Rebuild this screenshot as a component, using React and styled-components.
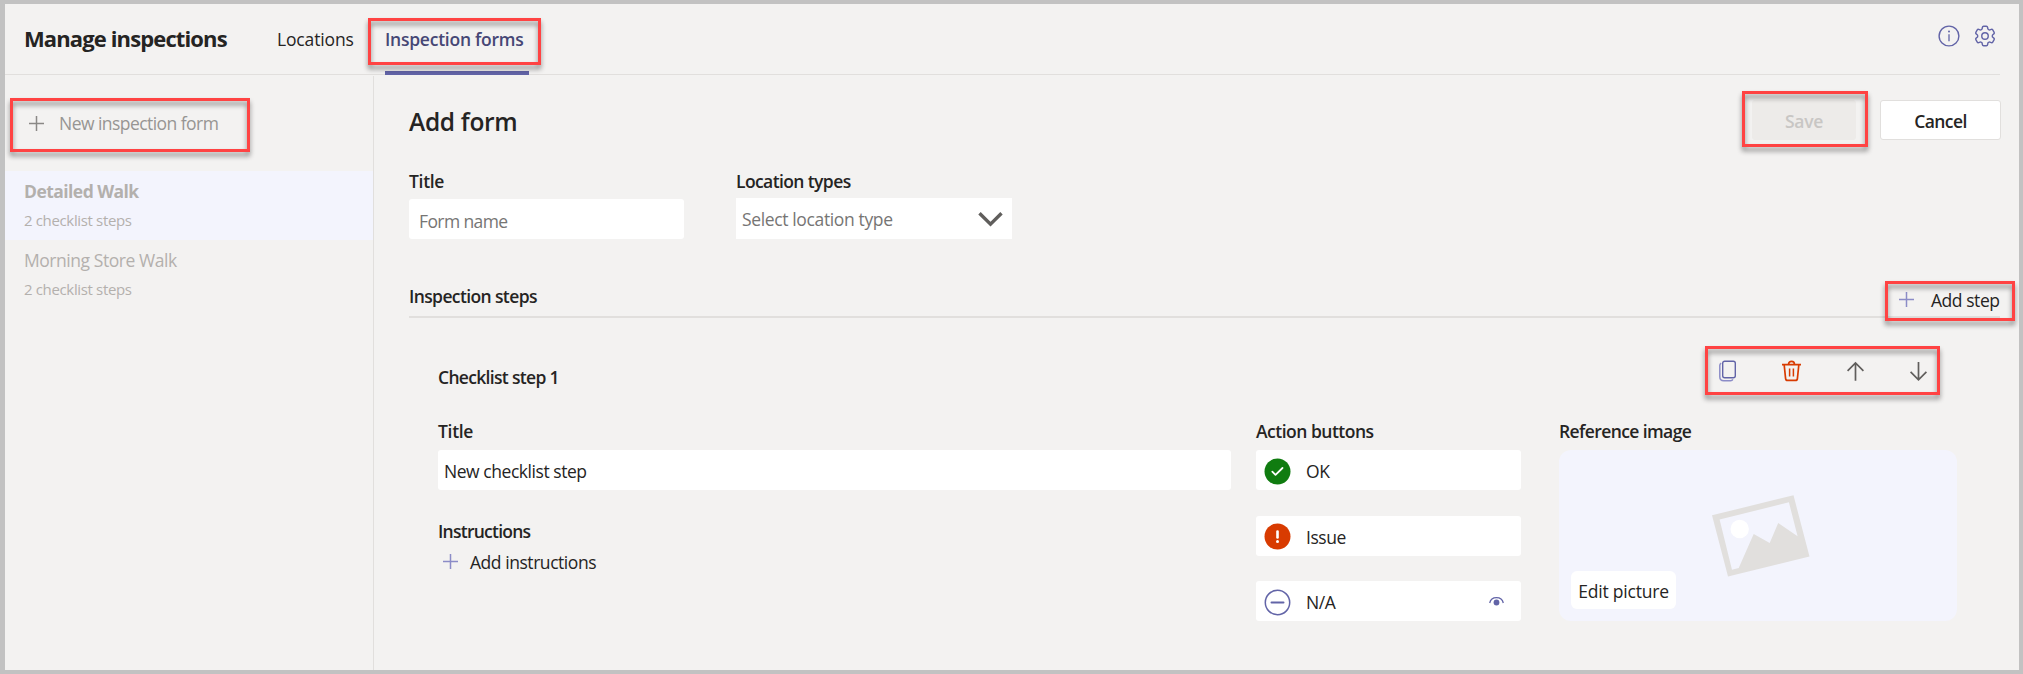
import React from "react";
import styled, { createGlobalStyle } from "styled-components";
import { HiOutlineCog6Tooth } from "react-icons/hi2";

const GlobalStyle = createGlobalStyle`
  * { box-sizing: border-box; }
  body { margin: 0; background: #f3f2f1; }
  button, input { font: inherit; color: inherit; letter-spacing: inherit; }
`;

const Frame = styled.div`
  display: flex;
  flex-direction: column;
  width: 2023px;
  height: 674px;
  border: solid #c2c2c2;
  border-width: 4px 4px 4px 5px;
  background: #f3f2f1;
  color: #252423;
  font: 400 17.5px/24px "Open Sans", "Noto Sans", sans-serif;
  letter-spacing: -0.45px;
  white-space: nowrap;
  overflow: hidden;
`;

const Header = styled.header`
  display: flex;
  align-items: flex-start;
  height: 71px;
  margin-right: 19px;
  border-bottom: 1px solid #e1dfdd;
`;

const AppTitle = styled.h1`
  width: 252px;
  margin: 19px 0 0;
  padding-left: 19px;
  font-size: 22px;
  line-height: 30px;
  font-weight: 700;
  letter-spacing: -0.88px;
`;

const Tabs = styled.nav`
  display: flex;
  gap: 31px;
  margin-left: 20px;
`;

const Tab = styled.a`
  position: relative;
  width: ${(p) => (p.$active ? 144 : 77)}px;
  height: 71px;
  padding-top: 23px;
  color: ${(p) => (p.$active ? "#464775" : "#252423")};
  font-weight: ${(p) => (p.$active ? 600 : 400)};
  letter-spacing: ${(p) => (p.$active ? -0.25 : -0.15)}px;
  border-bottom: 4px solid ${(p) => (p.$active ? "#6264a7" : "transparent")};
`;

const HeaderIcons = styled.div`
  display: flex;
  align-items: center;
  gap: 12px;
  height: 25px;
  margin: 19px 2px 0 auto;
  color: #6264a7;
`;

/* Hollow annotation frame laid over the control it points out. */
const Callout = styled.span`
  position: absolute;
  top: ${(p) => p.$top}px;
  left: ${(p) => p.$left}px;
  width: ${(p) => p.$width}px;
  height: ${(p) => p.$height}px;
  border: 3px solid #ff4343;
  filter: drop-shadow(0 4px 2.5px rgba(0, 0, 0, 0.45));
  pointer-events: none;
`;

const Body = styled.div`
  display: flex;
  flex: 1;
  margin-top: 1px;
  min-height: 0;
`;

const Sidebar = styled.aside`
  width: 369px;
  border-right: 1px solid #e1dfdd;
`;

const NewForm = styled.div`
  position: relative;
  display: flex;
  align-items: center;
  gap: 15px;
  height: 95px;
  padding: 0 0 1px 24px;
  color: #979593;
  letter-spacing: -0.55px;
`;

const FormItem = styled.div`
  display: flex;
  flex-direction: column;
  gap: 7px;
  height: 69px;
  padding: 8px 0 0 19px;
  color: #b3b0ad;
  background: ${(p) => (p.$selected ? "#f3f4fd" : "transparent")};
`;

const FormName = styled.span`
  font-weight: ${(p) => (p.$selected ? 700 : 400)};
  letter-spacing: ${(p) => (p.$selected ? -0.55 : -0.45)}px;
`;

const FormMeta = styled.span`
  font-size: 15px;
  line-height: 20px;
  letter-spacing: -0.35px;
`;

const Main = styled.main`
  flex: 1;
  padding: 24px 18px 0 35px;
`;

const PageHead = styled.div`
  display: flex;
  align-items: center;
  height: 40px;
`;

const PageTitle = styled.h2`
  margin: 3px auto 0 0;
  font-size: 24.5px;
  line-height: 32px;
  font-weight: 600;
  letter-spacing: -0.3px;
`;

const SaveSlot = styled.div`
  position: relative;
  display: flex;
  margin-right: 24px;
`;

const Button = styled.button`
  width: ${(p) => (p.disabled ? 104 : 121)}px;
  height: 40px;
  padding: 2px 0 0;
  border: 1px solid ${(p) => (p.disabled ? "#edebe9" : "#e1dfdd")};
  border-radius: 3px;
  background: ${(p) => (p.disabled ? "#edebe9" : "#fff")};
  color: ${(p) => (p.disabled ? "#c8c6c4" : "#252423")};
  font-weight: 600;
  letter-spacing: ${(p) => (p.disabled ? -0.3 : -0.55)}px;
`;

const Fields = styled.div`
  display: flex;
  align-items: flex-end;
  gap: 52px;
  margin-top: 29px;
`;

const Field = styled.div`
  display: flex;
  flex-direction: column;
  width: ${(p) => p.$width}px;
`;

const Label = styled.span`
  margin-bottom: ${(p) => p.$gap ?? 7}px;
  font-weight: 600;
  letter-spacing: ${(p) => p.$track ?? -0.6}px;
`;

const TextInput = styled.input`
  width: 100%;
  height: 40px;
  padding: 2px 0 0 ${(p) => p.$indent}px;
  border: 0;
  border-radius: 3px;
  background: #fff;
  &::placeholder { color: #767574; opacity: 1; letter-spacing: -0.6px; }
  &:placeholder-shown { padding-top: 4px; }
`;

const Select = styled.div`
  display: flex;
  align-items: center;
  justify-content: space-between;
  height: 41px;
  padding: 0 9px 0 6px;
  background: #fff;
  color: #767574;
  letter-spacing: -0.36px;
`;

const SectionHead = styled.div`
  display: flex;
  justify-content: space-between;
  width: 1591px;
  height: 37px;
  margin-top: 42px;
  padding-top: 3px;
  border-bottom: 2px solid #e1dfdd;
`;

const AddStep = styled.div`
  position: relative;
  display: flex;
  gap: 17px;
  width: 101px;
  padding-top: 4px;
  color: #252423;
`;

const Step = styled.section`
  padding: 42px 0 0 29px;
`;

const StepHead = styled.div`
  display: flex;
  justify-content: space-between;
  width: 1489px;
  height: 59px;
  padding-top: 5px;
`;

const StepActions = styled.div`
  position: relative;
  display: flex;
  justify-content: space-between;
  width: 208px;
  height: 24px;
  margin-top: -5px;
`;

const StepColumns = styled.div`
  display: flex;
  align-items: flex-start;
`;

const TitleColumn = styled(Field)`
  margin-right: 25px;
`;

const ActionColumn = styled(Field)`
  margin-right: 38px;
`;

const Instructions = styled.div`
  display: flex;
  flex-direction: column;
  margin-top: 29px;
`;

const AddInstructions = styled.div`
  display: flex;
  gap: 12px;
  padding-left: 5px;
`;

const ActionList = styled.div`
  display: flex;
  flex-direction: column;
  height: 171px;
  justify-content: space-between;
`;

const ActionRow = styled.div`
  display: flex;
  align-items: center;
  height: 40px;
  padding: 2px 17px 0 8px;
  border-radius: 3px;
  background: #fff;
`;

const ActionName = styled.span`
  flex: 1;
  margin-left: 15px;
`;

const ImageCard = styled.div`
  position: relative;
  display: flex;
  align-items: center;
  justify-content: center;
  height: 171px;
  padding: 0 0 0 5px;
  border-radius: 12px;
  background: #f3f4fd;
`;

const EditPicture = styled.button`
  position: absolute;
  left: 12px;
  bottom: 12px;
  width: 105px;
  height: 38px;
  padding: 2px 0 0;
  border: 0;
  border-radius: 6px;
  background: #fff;
  letter-spacing: -0.2px;
`;

const Icon = styled.svg`
  display: block;
  flex: none;
  fill: none;
  overflow: visible;
`;

const PlusIcon = styled(({ className }) => (
  <svg className={className} width="15" height="15" viewBox="0 0 15 15">
    <path d="M0 7.5h15M7.5 0v15" stroke="currentColor" strokeWidth="1.5" />
  </svg>
))`
  display: block;
  flex: none;
  margin-top: ${(p) => p.$top ?? 0}px;
  color: ${(p) => p.$color};
`;

const InfoIcon = () => (
  <Icon width="22" height="22" viewBox="0 0 22 22">
    <circle cx="11" cy="11" r="9.9" stroke="currentColor" strokeWidth="1.4" />
    <path d="M11 9.3v7" stroke="currentColor" strokeWidth="1.3" />
    <circle cx="11" cy="6.4" r="1" fill="currentColor" />
  </Icon>
);

const CopyIcon = () => (
  <Icon width="17" height="22" viewBox="0 0 17 22">
    <rect x="3.7" y="1.2" width="12.6" height="16.6" rx="2" stroke="#6264a7" strokeWidth="1.4" />
    <path d="M2.2 3.2C1.2 3.7.8 4.4.8 5.4v11.4c0 2.4 1.5 4 4 4h6.7c1.1 0 1.9-.4 2.4-1.400" stroke="#8b8cc7" strokeWidth="1.5" />
  </Icon>
);

const TrashIcon = () => (
  <Icon width="19" height="22" viewBox="0 0 19 22" stroke="#d83b01" strokeWidth="1.7">
    <path d="M0 4.7h19M6.5 4.500c0-4.200 6-4.200 6 0M2.200 5l1.400 13.600c.1 1.100.9 1.800 2 1.800h7.800c1.100 0 1.900-.7 2-1.800L16.800 5" />
    <path d="M7.600 8.500v8M11.400 8.500v8" strokeWidth="1.5" />
  </Icon>
);

const ArrowIcon = ({ down }) => (
  <Icon width="17" height="22" viewBox="0 0 17 22" stroke="#605e5c" strokeWidth="1.7">
    {down ? (
      <path d="M8.500 2v18M.6 11.800l7.900 8 7.900-8" />
    ) : (
      <path d="M8.500 20.800v-18M.6 10.900l7.900-8 7.900 8" />
    )}
  </Icon>
);

const ChevronIcon = () => (
  <Icon width="25" height="16" viewBox="0 0 25 16">
    <path d="M1.5 2.200l11 11 11-11" stroke="#605e5c" strokeWidth="3.4" />
  </Icon>
);

const OkIcon = () => (
  <Icon width="27" height="27" viewBox="0 0 27 27">
    <circle cx="13.5" cy="13.5" r="13" fill="#107c10" />
    <path d="M8.300 13.700l3.200 3.200 7-6.900" stroke="#fff" strokeWidth="1.8" strokeLinecap="round" strokeLinejoin="round" />
  </Icon>
);

const IssueIcon = () => (
  <Icon width="27" height="27" viewBox="0 0 27 27">
    <circle cx="13.5" cy="13.5" r="13" fill="#d83b01" />
    <path d="M13.5 8.500v6" stroke="#fff" strokeWidth="2.6" strokeLinecap="round" />
    <circle cx="13.5" cy="18.4" r="1.5" fill="#fff" />
  </Icon>
);

const NaIcon = () => (
  <Icon width="27" height="27" viewBox="0 0 27 27" stroke="#6264a7">
    <circle cx="13.5" cy="13.5" r="12.2" strokeWidth="1.5" />
    <path d="M7.500 13.500h12" strokeWidth="2" strokeLinecap="round" />
  </Icon>
);

const EyeIcon = () => (
  <Icon width="15" height="10" viewBox="0 0 15 10">
    <path d="M.7 6C2.200-1.100 12.800-1.100 14.300 6" stroke="#6264a7" strokeWidth="1.3" />
    <circle cx="7.5" cy="5.5" r="2.9" fill="#6264a7" />
  </Icon>
);

const PictureIcon = () => (
  <Icon width="98" height="82" viewBox="0 0 98 82">
    <path
      d="M0 20.300L81.500.3 97.500 61.500 16 81.500zM7.600 24.600l12.400 50.100 6.700-1.700 15-34.100 16 9.100 8.500-20 19.400 13.300-8.700-34z"
      fill="#e1dfdd"
      fillRule="evenodd"
    />
    <circle cx="27.7" cy="34" r="9.2" fill="#fff" />
  </Icon>
);

const forms = [
  { name: "Detailed Walk", meta: "2 checklist steps", selected: true },
  { name: "Morning Store Walk", meta: "2 checklist steps", selected: false },
];

const actions = [
  { name: "OK", icon: <OkIcon /> },
  { name: "Issue", icon: <IssueIcon /> },
  { name: "N/A", icon: <NaIcon />, visible: true },
];

export default function App() {
  return (
    <>
      <GlobalStyle />
      <Frame>
        <Header>
          <AppTitle>Manage inspections</AppTitle>
          <Tabs>
            <Tab>Locations</Tab>
            <Tab $active>
              Inspection forms
              <Callout $top={14} $left={-17} $width={173} $height={47} />
            </Tab>
          </Tabs>
          <HeaderIcons>
            <InfoIcon />
            <HiOutlineCog6Tooth size={26} strokeWidth={1.3} />
          </HeaderIcons>
        </Header>
        <Body>
          <Sidebar>
            <NewForm>
              <PlusIcon $color="#8a8886" />
              New inspection form
              <Callout $top={22} $left={5} $width={240} $height={54} />
            </NewForm>
            {forms.map((f) => (
              <FormItem key={f.name} $selected={f.selected}>
                <FormName $selected={f.selected}>{f.name}</FormName>
                <FormMeta>{f.meta}</FormMeta>
              </FormItem>
            ))}
          </Sidebar>
          <Main>
            <PageHead>
              <PageTitle>Add form</PageTitle>
              <SaveSlot>
                <Button disabled>Save</Button>
                <Callout $top={-9} $left={-10} $width={126} $height={56} />
              </SaveSlot>
              <Button>Cancel</Button>
            </PageHead>
            <Fields>
              <Field $width={275}>
                <Label $gap={6} $track={-0.3}>Title</Label>
                <TextInput $indent={10} placeholder="Form name" />
              </Field>
              <Field $width={276}>
                <Label $gap={5}>Location types</Label>
                <Select>
                  Select location type
                  <ChevronIcon />
                </Select>
              </Field>
            </Fields>
            <SectionHead>
              <Label $track={-0.62}>Inspection steps</Label>
              <AddStep>
                <PlusIcon $color="#8b8cc7" $top={4} />
                Add step
                <Callout $top={-3} $left={-14} $width={130} $height={40} />
              </AddStep>
            </SectionHead>
            <Step>
              <StepHead>
                <Label $track={-0.68}>Checklist step 1</Label>
                <StepActions>
                  <CopyIcon />
                  <TrashIcon />
                  <ArrowIcon />
                  <ArrowIcon down />
                  <Callout $top={-14} $left={-14} $width={235} $height={49} />
                </StepActions>
              </StepHead>
              <StepColumns>
                <TitleColumn $width={793}>
                  <Label $track={-0.3}>Title</Label>
                  <TextInput $indent={6} defaultValue="New checklist step" />
                  <Instructions>
                    <Label $track={-0.75}>Instructions</Label>
                    <AddInstructions>
                      <PlusIcon $color="#8b8cc7" $top={4} />
                      Add instructions
                    </AddInstructions>
                  </Instructions>
                </TitleColumn>
                <ActionColumn $width={265}>
                  <Label $track={-0.5}>Action buttons</Label>
                  <ActionList>
                    {actions.map((a) => (
                      <ActionRow key={a.name}>
                        {a.icon}
                        <ActionName>{a.name}</ActionName>
                        {a.visible && <EyeIcon />}
                      </ActionRow>
                    ))}
                  </ActionList>
                </ActionColumn>
                <Field $width={398}>
                  <Label>Reference image</Label>
                  <ImageCard>
                    <PictureIcon />
                    <EditPicture>Edit picture</EditPicture>
                  </ImageCard>
                </Field>
              </StepColumns>
            </Step>
          </Main>
        </Body>
      </Frame>
    </>
  );
}
